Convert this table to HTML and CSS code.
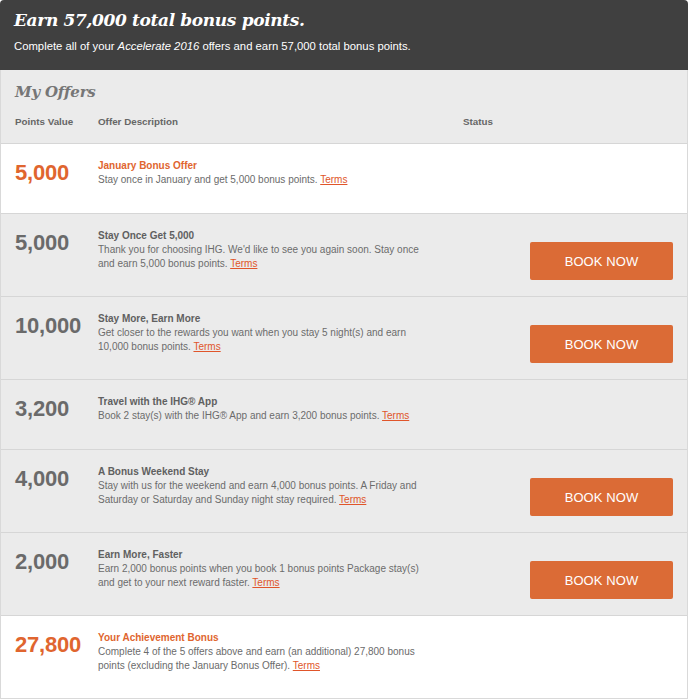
FILE: index.html
```html
<!DOCTYPE html>
<html>
<head>
<meta charset="utf-8">
<link rel="stylesheet" href="styles.css">
</head>
<body>
<div class="panel">
  <div class="hero">
    <h1 class="hero-title">Earn 57,000 total bonus points.</h1>
    <p class="hero-sub">Complete all of your <em>Accelerate 2016</em> offers and earn 57,000 total bonus points.</p>
  </div>
  <div class="offers">
    <div class="offers-head">
      <h2 class="offers-title">My Offers</h2>
      <div class="cols">
        <span>Points Value</span>
        <span>Offer Description</span>
        <span>Status</span>
      </div>
    </div>

    <div class="row featured">
      <div class="pts">5,000</div>
      <div class="desc">
        <div class="name">January Bonus Offer</div>
        <p>Stay once in January and get 5,000 bonus points. <a href="#">Terms</a></p>
      </div>
      <div class="status"></div>
    </div>

    <div class="row">
      <div class="pts">5,000</div>
      <div class="desc">
        <div class="name">Stay Once Get 5,000</div>
        <p>Thank you for choosing IHG. We'd like to see you again soon. Stay once and earn 5,000 bonus points. <a href="#">Terms</a></p>
      </div>
      <div class="status"><a class="btn" href="#">BOOK NOW</a></div>
    </div>

    <div class="row">
      <div class="pts">10,000</div>
      <div class="desc">
        <div class="name">Stay More, Earn More</div>
        <p>Get closer to the rewards you want when you stay 5 night(s) and earn 10,000 bonus points. <a href="#">Terms</a></p>
      </div>
      <div class="status"><a class="btn" href="#">BOOK NOW</a></div>
    </div>

    <div class="row">
      <div class="pts">3,200</div>
      <div class="desc">
        <div class="name">Travel with the IHG® App</div>
        <p>Book 2 stay(s) with the IHG® App and earn 3,200 bonus points. <a href="#">Terms</a></p>
      </div>
      <div class="status"></div>
    </div>

    <div class="row">
      <div class="pts">4,000</div>
      <div class="desc">
        <div class="name">A Bonus Weekend Stay</div>
        <p>Stay with us for the weekend and earn 4,000 bonus points. A Friday and Saturday or Saturday and Sunday night stay required. <a href="#">Terms</a></p>
      </div>
      <div class="status"><a class="btn" href="#">BOOK NOW</a></div>
    </div>

    <div class="row">
      <div class="pts">2,000</div>
      <div class="desc">
        <div class="name">Earn More, Faster</div>
        <p>Earn 2,000 bonus points when you book 1 bonus points Package stay(s) and get to your next reward faster. <a href="#">Terms</a></p>
      </div>
      <div class="status"><a class="btn" href="#">BOOK NOW</a></div>
    </div>

    <div class="row featured last">
      <div class="pts">27,800</div>
      <div class="desc">
        <div class="name">Your Achievement Bonus</div>
        <p>Complete 4 of the 5 offers above and earn (an additional) 27,800 bonus points (excluding the January Bonus Offer). <a href="#">Terms</a></p>
      </div>
      <div class="status"></div>
    </div>
  </div>
</div>
</body>
</html>
```

FILE: styles.css
```css
* { box-sizing: border-box; }
html, body { margin: 0; padding: 0; background: #fff; }
body { font-family: "Liberation Sans", Arial, sans-serif; color: #666; }

.panel { width: 688px; }

.hero {
  background: #404040;
  color: #fff;
  height: 70px;
  padding: 8px 14px 0;
  border-radius: 4px 4px 0 0;
}
.hero-title {
  margin: 0;
  font-family: "DejaVu Serif", Georgia, serif;
  font-style: italic;
  font-weight: bold;
  font-size: 17px;
  line-height: 24px;
  letter-spacing: -0.35px;
}
.hero-sub {
  margin: 7px 0 0;
  font-size: 11.3px;
  line-height: 15px;
}

.offers {
  border: 1px solid #d9d9d9;
  border-top: none;
}
.offers-head {
  background: #ebebeb;
  height: 74px;
  padding: 12px 14px 0;
  border-bottom: 1px solid #d6d6d6;
}
.offers-title {
  margin: 0;
  font-family: "DejaVu Serif", Georgia, serif;
  font-style: italic;
  font-weight: bold;
  font-size: 15px;
  line-height: 20px;
  color: #767676;
  letter-spacing: -0.2px;
}
.cols {
  display: grid;
  grid-template-columns: 83px 365px 1fr;
  margin-top: 13px;
  font-size: 9.8px;
  font-weight: bold;
  color: #666;
  line-height: 14px;
}

.row {
  display: grid;
  grid-template-columns: 83px 365px 1fr;
  align-items: start;
  min-height: 70px;
  padding: 15px 14px 16px 14px;
  background: #ebebeb;
  border-bottom: 1px solid #d6d6d6;
}
.row.featured { background: #fff; }
.row.last { border-bottom: none; }

.pts {
  font-size: 22px;
  font-weight: bold;
  line-height: 28px;
  color: #6a6a6a;
  letter-spacing: -0.2px;
}
.featured .pts { color: #e0652f; }

.desc { padding-bottom: 9px; }
.name {
  font-size: 10px;
  font-weight: bold;
  line-height: 14px;
  color: #606060;
}
.featured .name { color: #e0652f; }
.desc p {
  margin: 0;
  width: 322px;
  font-size: 10px;
  line-height: 14px;
  color: #6b6b6b;
}
.desc a {
  color: #e0552a;
  text-decoration: underline;
}

.status {
  display: flex;
  justify-content: flex-end;
}
.btn {
  display: flex;
  align-items: center;
  justify-content: center;
  width: 143px;
  height: 38px;
  margin-top: 13px;
  background: #db6b36;
  border-radius: 2px;
  color: #fff;
  font-size: 13px;
  text-decoration: none;
  letter-spacing: 0.1px;
}
```
